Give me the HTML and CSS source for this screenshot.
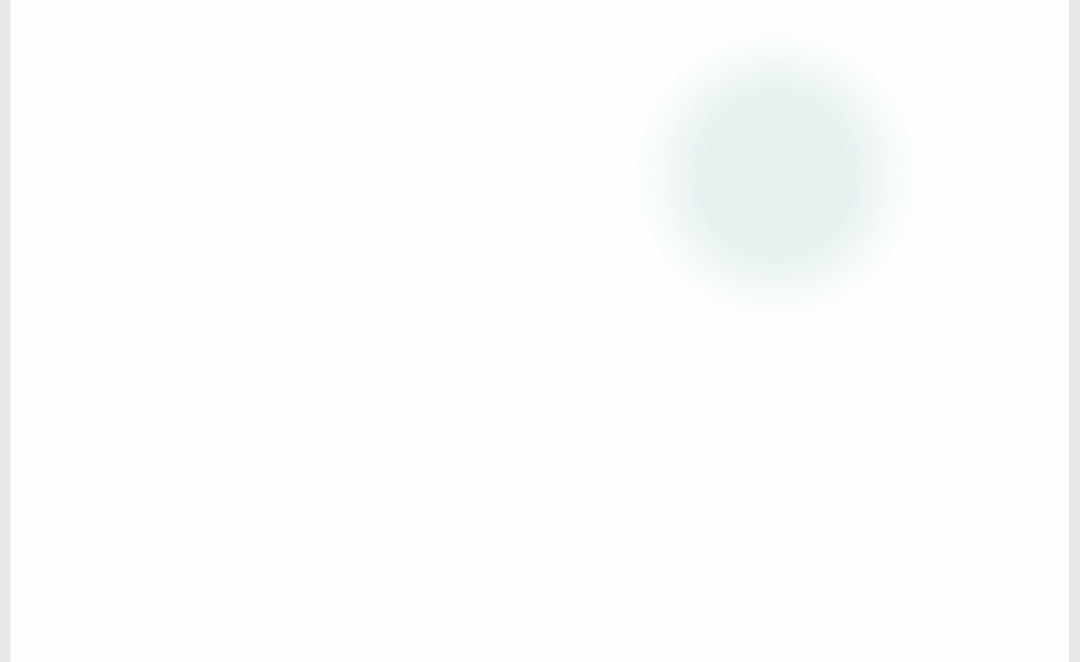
FILE: index.html
```html
<!DOCTYPE html>
<html lang="en">
<head>
    <meta charset="UTF-8">
    <meta name="viewport" content="width=device-width, initial-scale=1.0">
    <title>Loading</title>
    <link rel="stylesheet" href="styles.css">
</head>
<body>
    <div class="frame">
        <div class="panel">
            <div class="blob">
                <div class="blob-core"></div>
            </div>
        </div>
    </div>
</body>
</html>
```

FILE: styles.css
```css
html, body {
    margin: 0;
    padding: 0;
    height: 100%;
}
body {
    font-family: "Liberation Sans", Arial, sans-serif;
    background-color: #e6e8ea;
    overflow: hidden;
}
.frame {
    height: 100vh;
    padding: 0 11px 0 10px;
    box-sizing: border-box;
}
.panel {
    position: relative;
    height: 100%;
    background-color: #fefefe;
    border-left: 1px solid #f1f2f4;
    overflow: hidden;
}
.blob {
    position: absolute;
    left: 642px;
    top: 50px;
    width: 246px;
    height: 250px;
    border-radius: 50%;
    background-color: #f1f8f8;
    filter: blur(16px);
    display: flex;
    align-items: center;
    justify-content: center;
}
.blob-core {
    width: 186px;
    height: 196px;
    border-radius: 50%;
    background-color: #e7f1f0;
}
```
